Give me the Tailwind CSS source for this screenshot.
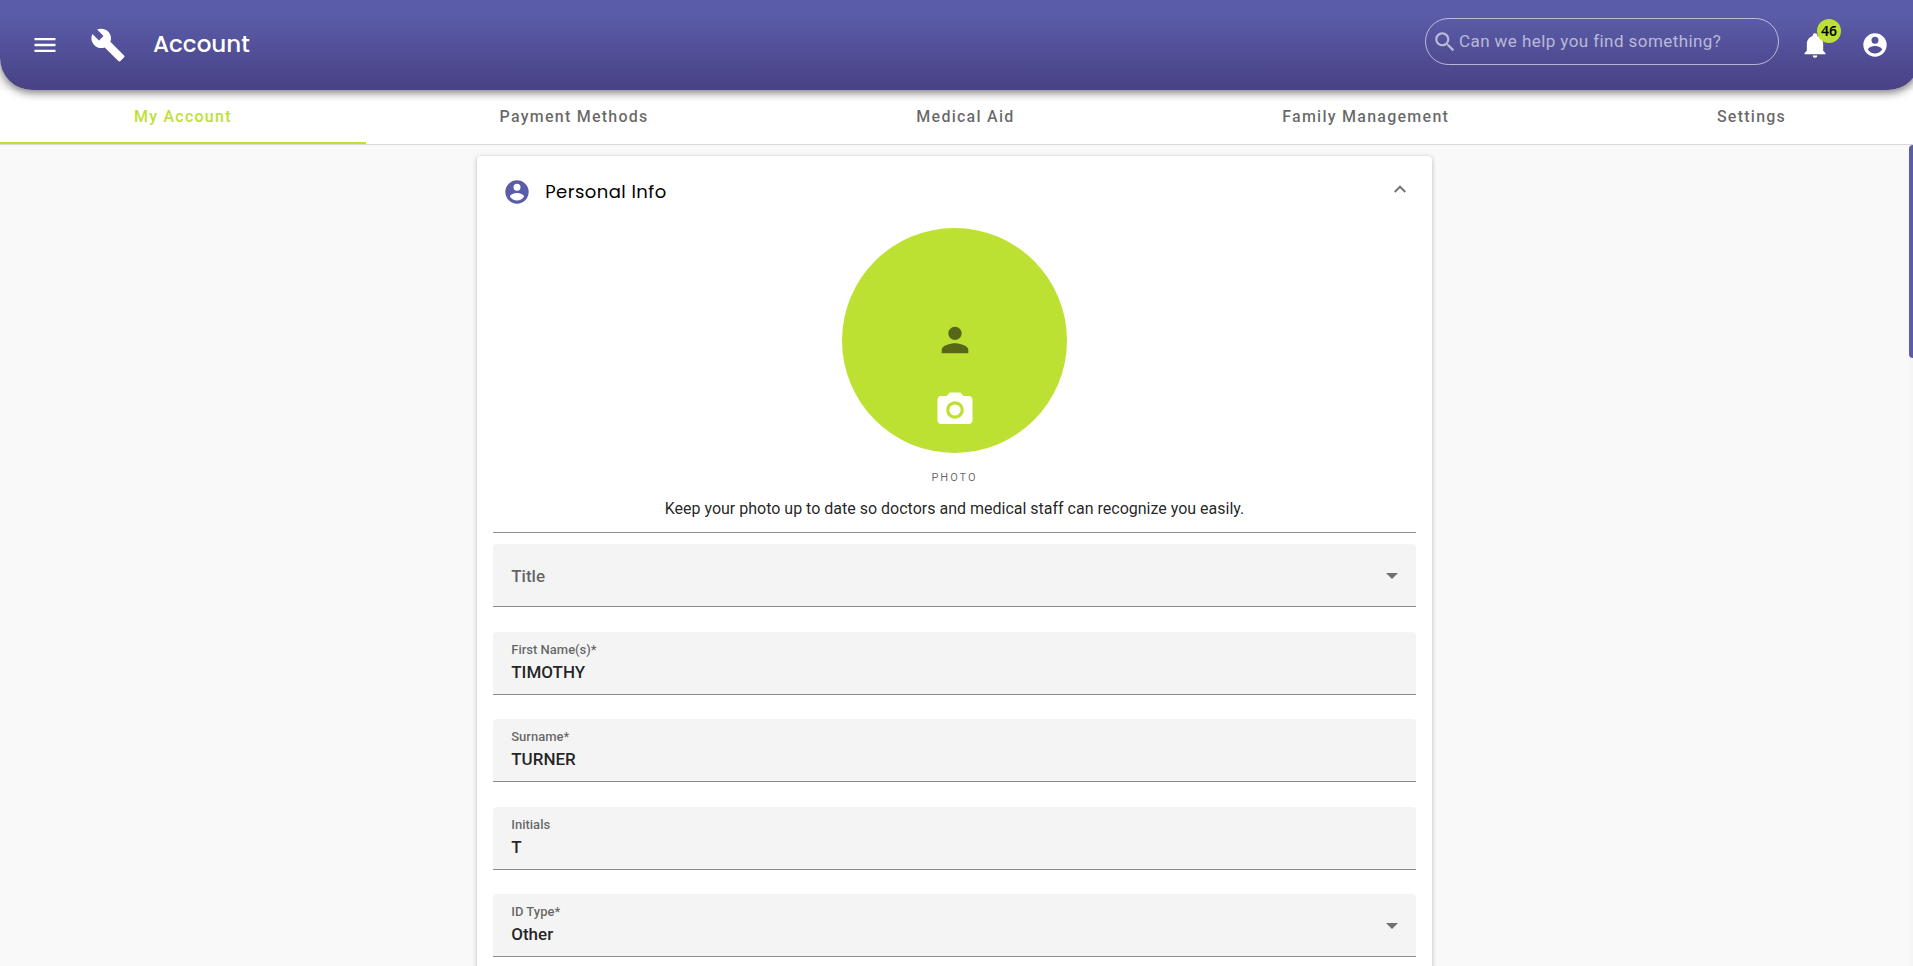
<!DOCTYPE html>
<html lang="en">
<head>
    <meta charset="UTF-8">
    <meta name="viewport" content="width=device-width, initial-scale=1.0">
    <title>Account</title>
    <script src="https://cdn.jsdelivr.net/npm/@tailwindcss/browser@4"></script>
</head>
<body class="h-screen overflow-hidden flex flex-col bg-[#f9f9f9] text-black/87 font-[Roboto,sans-serif]">
    <header class="relative z-10 shrink-0 -mr-[7px] h-[90px] pl-[31px] pr-[31px] flex items-center rounded-b-[32px] bg-linear-to-b from-[#5b5ca9] from-15% to-[#484285] text-white shadow-[0_3px_8px_rgba(0,0,0,0.5)]">
        <button type="button" aria-label="Menu">
            <svg class="size-7" viewBox="0 0 24 24" fill="currentColor"><path d="M3 18h18v-2H3v2zm0-5h18v-2H3v2zm0-7v2h18V6H3z"/></svg>
        </button>
        <svg class="size-9 ml-[31px]" viewBox="0 0 24 24" fill="currentColor"><path d="M22.7 19l-9.1-9.1c.9-2.3.4-5-1.5-6.9-2-2-5-2.4-7.4-1.3L9 6 6 9 1.6 4.7C.4 7.1.9 10.1 2.9 12.1c1.9 1.9 4.6 2.4 6.9 1.5l9.1 9.1c.4.4 1 .4 1.4 0l2.3-2.3c.5-.4.5-1.1.1-1.4z"/></svg>
        <h1 class="ml-[27px] pb-0.5 text-[23px] leading-8 font-medium font-[Poppins,Inter,sans-serif]">Account</h1>

        <div class="ml-auto mb-[7px] w-[354px] h-[47px] pl-1.5 pr-2 flex items-center rounded-full border border-white/60">
            <svg class="size-[26px] shrink-0 text-white/60" viewBox="0 0 24 24" fill="currentColor"><path d="M15.5 14h-.79l-.28-.27C15.41 12.59 16 11.11 16 9.5 16 5.91 13.09 3 9.5 3S3 5.91 3 9.5 5.91 16 9.5 16c1.61 0 3.09-.59 4.23-1.57l.27.28v.79l5 4.99L20.49 19l-4.99-5zm-6 0C7.01 14 5 11.99 5 9.5S7.01 5 9.5 5 14 7.01 14 9.5 11.99 14 9.5 14z"/></svg>
            <input type="search" aria-label="Search" placeholder="Can we help you find something?" class="ml-px flex-1 min-w-0 text-[17px] tracking-wide outline-none placeholder:text-white/60">
        </div>

        <button type="button" aria-label="Notifications" class="relative ml-[22px]">
            <svg class="size-7" viewBox="0 0 24 24" fill="currentColor"><path d="M21 19v1H3v-1l2-2v-6c0-3.1 2.03-5.83 5-6.71V4a2 2 0 0 1 4 0v.29c2.97.88 5 3.61 5 6.71v6l2 2zm-7 2a2 2 0 0 1-4 0h4z"/></svg>
            <span class="absolute -top-3 left-4 size-6 flex items-center justify-center rounded-full bg-[#bde133] text-sm font-semibold font-['Noto_Sans',sans-serif] text-black">46</span>
        </button>
        <button type="button" aria-label="Profile" class="ml-8">
            <svg class="size-7" viewBox="0 0 24 24" fill="currentColor"><path d="M12 19.2c-2.5 0-4.71-1.28-6-3.2.03-2 4-3.1 6-3.1s5.97 1.1 6 3.1c-1.29 1.92-3.5 3.2-6 3.2M12 5a3 3 0 1 1 0 6 3 3 0 0 1 0-6m0-3a10 10 0 1 0 0 20 10 10 0 0 0 0-20z"/></svg>
        </button>
    </header>

    <nav class="shrink-0 -mr-[7px] h-[55px] flex bg-white border-b border-[#dadada] font-medium tracking-[1.25px] text-black/60">
        <a href="#account" class="grow pt-0.5 flex items-center justify-center border-b-2 border-[#bde133] text-[#bde133]">My Account</a>
        <a href="#payment" class="grow pt-0.5 flex items-center justify-center border-b-2 border-transparent">Payment Methods</a>
        <a href="#medical" class="grow pt-0.5 flex items-center justify-center border-b-2 border-transparent">Medical Aid</a>
        <a href="#family" class="grow pt-0.5 flex items-center justify-center border-b-2 border-transparent">Family Management</a>
        <a href="#settings" class="grow pt-0.5 flex items-center justify-center border-b-2 border-transparent">Settings</a>
    </nav>

    <div class="flex-1 min-h-0 flex">
        <main class="flex-1 min-w-0 overflow-hidden pt-[11px]">
            <section class="w-1/2 mx-auto px-4 pb-6 rounded bg-white shadow-[0_1px_5px_rgba(0,0,0,0.25)]">
                <div class="h-[72px] px-2.5 flex items-center">
                    <svg class="size-7 text-[#5b5ca9]" viewBox="0 0 24 24" fill="currentColor"><path d="M12 19.2c-2.5 0-4.71-1.28-6-3.2.03-2 4-3.1 6-3.1s5.97 1.1 6 3.1c-1.29 1.92-3.5 3.2-6 3.2M12 5a3 3 0 1 1 0 6 3 3 0 0 1 0-6m0-3a10 10 0 1 0 0 20 10 10 0 0 0 0-20z"/></svg>
                    <h2 class="ml-3.5 text-lg tracking-wide text-black font-[Poppins,Inter,sans-serif]">Personal Info</h2>
                    <button type="button" aria-label="Collapse" class="ml-auto mb-1.5">
                        <svg class="w-3 h-2 text-black/54" viewBox="0 0 12 8" fill="none" stroke="currentColor" stroke-width="2"><path d="M.7 7L6 1.7 11.3 7"/></svg>
                    </button>
                </div>

                <div class="flex flex-col items-center">
                    <div class="size-[225px] pt-[92px] flex flex-col items-center rounded-full bg-[#bde133]">
                        <svg class="size-10 text-black/54" viewBox="0 0 24 24" fill="currentColor"><path d="M12 12c2.21 0 4-1.79 4-4s-1.79-4-4-4-4 1.79-4 4 1.79 4 4 4zm0 2c-2.67 0-8 1.34-8 4v2h16v-2c0-2.66-5.33-4-8-4z"/></svg>
                        <button type="button" aria-label="Change photo" class="mt-[29px]">
                            <svg class="size-[42px] text-white" viewBox="0 0 24 24" fill="currentColor"><circle cx="12" cy="12" r="3.2"/><path d="M9 2L7.17 4H4c-1.1 0-2 .9-2 2v12c0 1.1.9 2 2 2h16c1.1 0 2-.9 2-2V6c0-1.1-.9-2-2-2h-3.17L15 2H9zm3 15c-2.76 0-5-2.24-5-5s2.24-5 5-5 5 2.24 5 5-2.24 5-5 5z"/></svg>
                        </button>
                    </div>
                    <p class="mt-[17px] text-[11px] leading-4 tracking-[2px] text-black/60">PHOTO</p>
                    <p class="mt-[11px] leading-6">Keep your photo up to date so doctors and medical staff can recognize you easily.</p>
                </div>
                <hr class="mt-[11px] border-[#8c8c8c]">

                <form class="mt-[11px] font-medium">
                    <div class="relative h-[63px] odd:mb-[25px] even:mb-6 rounded-t bg-[#f4f4f4] border-b border-[#8c8c8c]">
                        <label for="title" class="absolute left-[18px] top-5 text-[17px] leading-6 text-black/60 pointer-events-none">Title</label>
                        <select id="title" class="size-full px-[18px] appearance-none outline-none">
                            <option value=""></option>
                            <option>Mr</option>
                            <option>Mrs</option>
                            <option>Ms</option>
                            <option>Dr</option>
                        </select>
                        <svg class="absolute right-[18px] top-[29px] w-3 h-1.5 text-black/54 pointer-events-none" viewBox="0 0 12 6" fill="currentColor"><path d="M0 0h12L6 6z"/></svg>
                    </div>
                    <div class="h-[63px] odd:mb-[25px] even:mb-6 px-[18px] pt-2.5 flex flex-col rounded-t bg-[#f4f4f4] border-b border-[#8c8c8c]">
                        <label for="firstName" class="text-[13px] leading-4 text-black/60">First Name(s)*</label>
                        <input type="text" id="firstName" value="TIMOTHY" class="mt-[3px] h-6 text-[17px] outline-none">
                    </div>
                    <div class="h-[63px] odd:mb-[25px] even:mb-6 px-[18px] pt-2.5 flex flex-col rounded-t bg-[#f4f4f4] border-b border-[#8c8c8c]">
                        <label for="surname" class="text-[13px] leading-4 text-black/60">Surname*</label>
                        <input type="text" id="surname" value="TURNER" class="mt-[3px] h-6 text-[17px] outline-none">
                    </div>
                    <div class="h-[63px] odd:mb-[25px] even:mb-6 px-[18px] pt-2.5 flex flex-col rounded-t bg-[#f4f4f4] border-b border-[#8c8c8c]">
                        <label for="initials" class="text-[13px] leading-4 text-black/60">Initials</label>
                        <input type="text" id="initials" value="T" class="mt-[3px] h-6 text-[17px] outline-none">
                    </div>
                    <div class="relative h-[63px] odd:mb-[25px] even:mb-6 px-[18px] pt-2.5 flex flex-col rounded-t bg-[#f4f4f4] border-b border-[#8c8c8c]">
                        <label for="idType" class="text-[13px] leading-4 text-black/60">ID Type*</label>
                        <select id="idType" class="mt-0.5 h-6 text-[17px] leading-6 appearance-none outline-none">
                            <option>Other</option>
                            <option>Passport</option>
                        </select>
                        <svg class="absolute right-[18px] top-[29px] w-3 h-1.5 text-black/54 pointer-events-none" viewBox="0 0 12 6" fill="currentColor"><path d="M0 0h12L6 6z"/></svg>
                    </div>
                </form>
            </section>
        </main>
        <!-- scrollbar -->
        <div class="w-1 shrink-0 bg-[#f5f5f5]">
            <div class="h-[213px] rounded-l bg-[#5b5ca9]"></div>
        </div>
    </div>
</body>
</html>
